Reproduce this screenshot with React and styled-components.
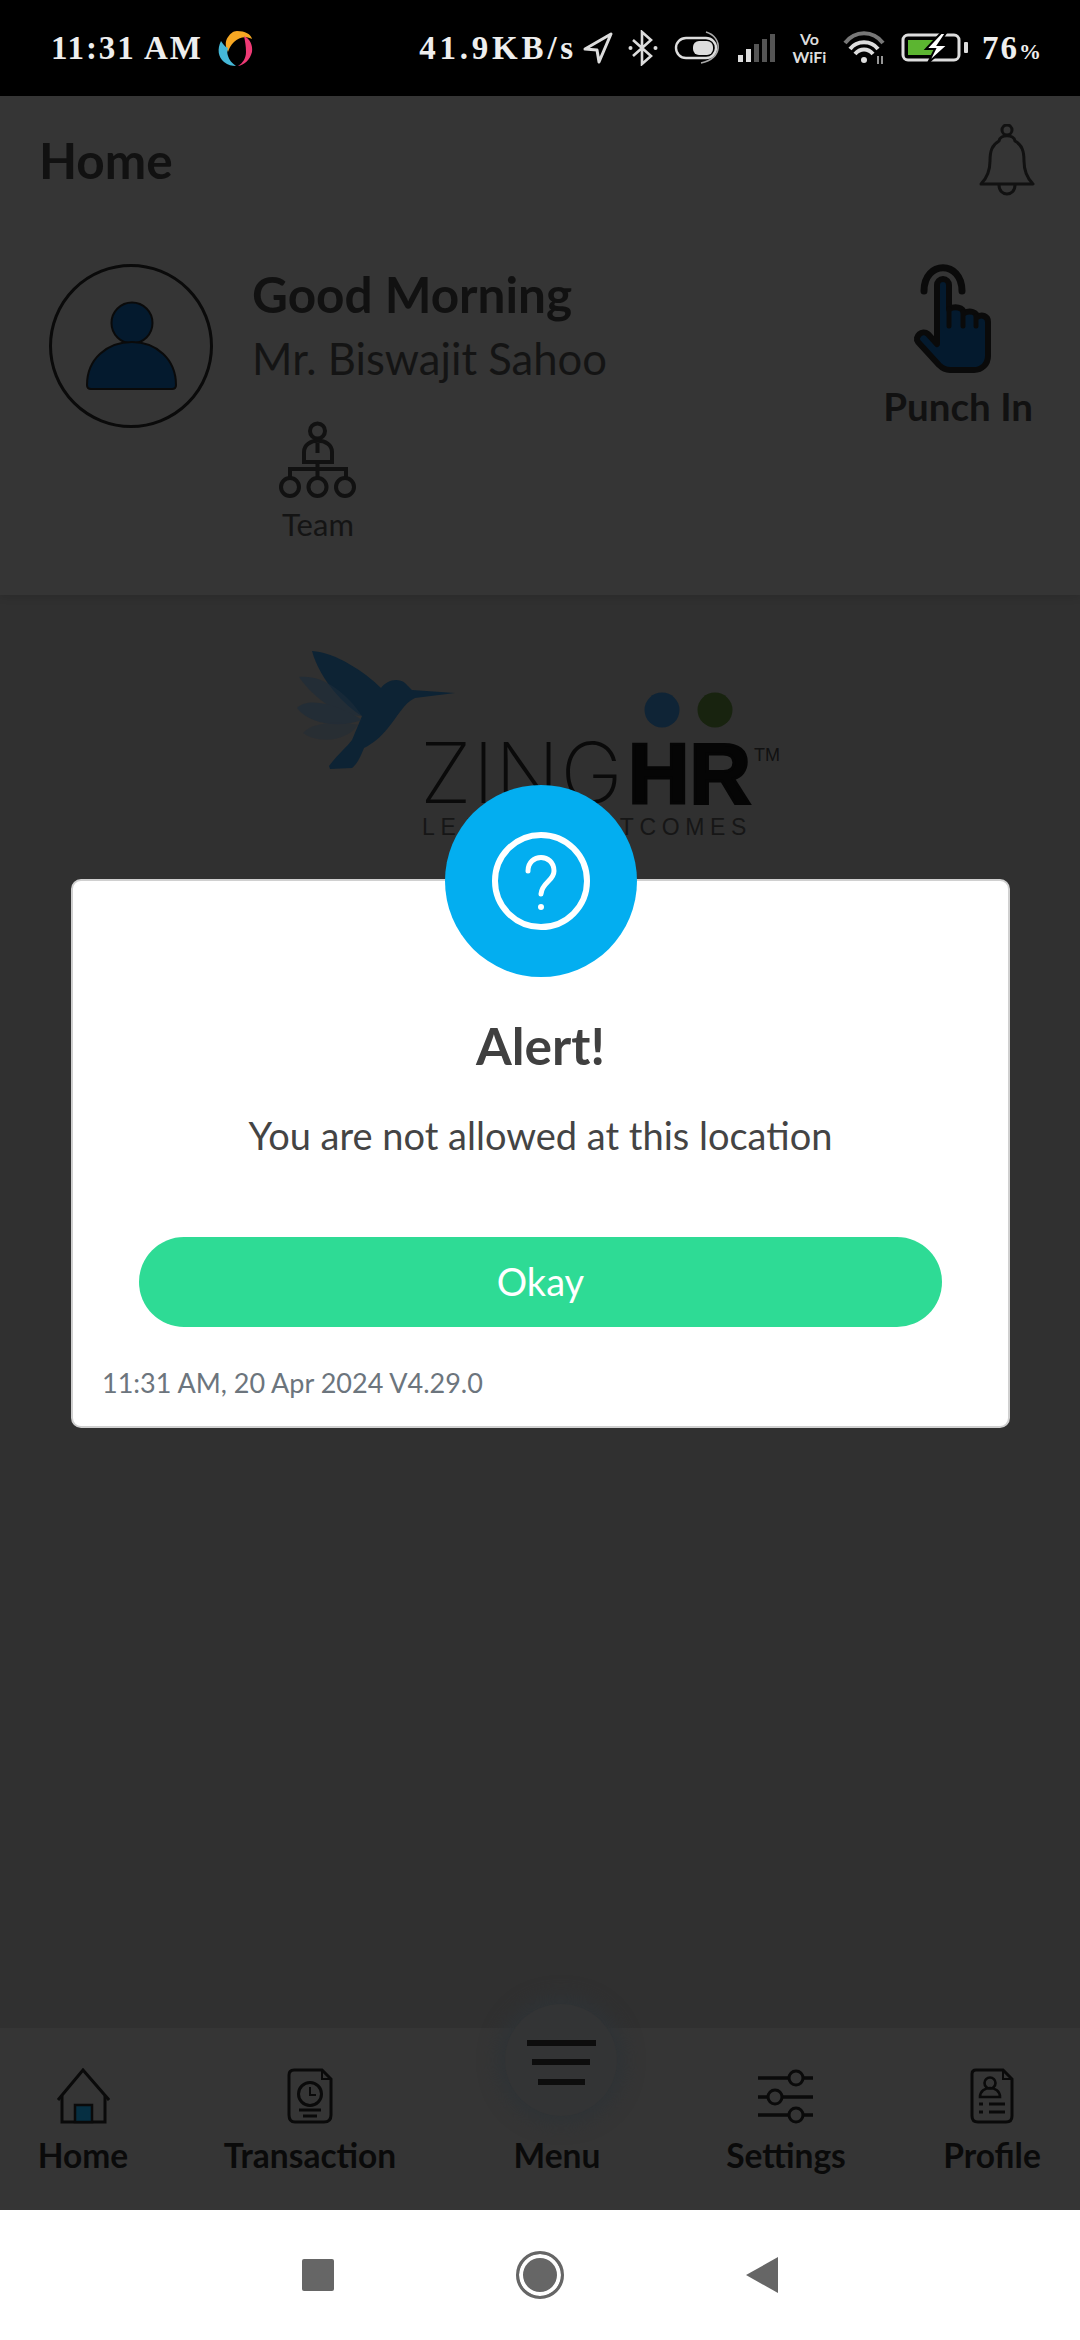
import React from "react";
import styled, { createGlobalStyle } from "styled-components";

const GlobalStyle = createGlobalStyle`
    html, body {
        margin: 0;
        padding: 0;
        background: #303030;
    }
    * {
        box-sizing: border-box;
    }
`;

const App = () => {
    return (
        <Page>
            <GlobalStyle />
            <StatusBar>
                <StatusLeft>
                    <StatusText $spacing={1.9}>11:31 AM</StatusText>
                    <Icon $gap={14} width="36" height="36" viewBox="223 30 36 36">
                        <path d="M243 31c8 0 14 3 15 8-6-3-13-2-18 3-3 3-5 6-6 10-3-6-3-11 0-15 2-3 5-6 9-6z" fill="#f7a823" />
                        <path d="M250 36c6 3 9 9 8 16-2 8-8 13-14 14 5-3 8-8 8-14 0-6-1-11-2-16z" fill="#ee3a75" />
                        <path d="M227 41c-4 8-3 16 3 21 4 3 8 4 12 4-4-3-7-6-8-10-1-3-1-5 0-8-3-1-5-4-7-7z" fill="#45b8d8" />
                    </Icon>
                </StatusLeft>
                <StatusRight>
                    <StatusText $spacing={3.8}>41.9KB/s</StatusText>
                    <Icon $gap={6} width="30" height="34" viewBox="580 32 30 34">
                        <path d="M582 50 L608 35 L596 63 L594 51 Z" fill="none" stroke="#ddd" strokeWidth="3" strokeLinejoin="round" />
                    </Icon>
                    <Icon $gap={15} width="30" height="36" viewBox="625 31 30 36">
                        <path d="M630 41 L648 57 L639 65 V33 L648 41 L630 57" fill="none" stroke="#ddd" strokeWidth="2.6" />
                        <circle cx="627.5" cy="49" r="2" fill="#ddd" />
                        <circle cx="652.5" cy="49" r="2" fill="#ddd" />
                    </Icon>
                    <Icon $gap={16} width="49" height="36" viewBox="671 31 49 36">
                        <rect x="673" y="39" width="40" height="20" rx="10" fill="none" stroke="#ddd" strokeWidth="2.4" />
                        <rect x="690" y="42" width="20" height="14" rx="6" fill="#ddd" />
                        <path d="M703 33 C720 38 720 60 698 64" fill="none" stroke="#aaa" strokeWidth="1.6" />
                    </Icon>
                    <Icon $gap={13} width="42" height="30" viewBox="733 33 42 30">
                        <rect x="735" y="55" width="5" height="7" fill="#ddd" />
                        <rect x="743" y="49" width="5" height="13" fill="#ddd" />
                        <rect x="751" y="44" width="5" height="18" fill="#555" />
                        <rect x="759" y="39" width="5" height="23" fill="#555" />
                        <rect x="767" y="34" width="5" height="28" fill="#555" />
                    </Icon>
                    <VoWifi>
                        <span>Vo</span>
                        <span>WiFi</span>
                    </VoWifi>
                    <Icon $gap={15} width="42" height="34" viewBox="838 32 42 34">
                        <path d="M840 44 C850 31 868 31 878 44" fill="none" stroke="#777" strokeWidth="4" />
                        <path d="M845 50 C852 41 866 41 873 50" fill="none" stroke="#ddd" strokeWidth="4" />
                        <path d="M850 55 C855 49 863 49 868 55" fill="none" stroke="#ddd" strokeWidth="4" />
                        <circle cx="859" cy="61" r="3" fill="#ddd" />
                        <path d="M873 57v8M877 57v8" stroke="#bbb" strokeWidth="1.6" />
                    </Icon>
                    <Icon $gap={16} width="68" height="34" viewBox="896 32 68 34">
                        <rect x="898" y="36" width="56" height="25" rx="5" fill="none" stroke="#ddd" strokeWidth="3" />
                        <rect x="903" y="41" width="30" height="15" fill="#5cb531" />
                        <rect x="959" y="43" width="4" height="11" rx="1" fill="#ddd" />
                        <path d="M936 34 L921 50 H930 L923 64 L943 46 H933 L941 34 Z" fill="#fff" stroke="#000" strokeWidth="2" />
                    </Icon>
                    <Battery>
                        76<small>%</small>
                    </Battery>
                </StatusRight>
            </StatusBar>

            <HomePanel>
                <TitleRow>
                    <Title>Home</Title>
                    <svg width="56" height="72" viewBox="979 125 56 72">
                        <circle cx="1007" cy="131" r="5" fill="none" stroke="#111" strokeWidth="3" />
                        <path d="M999 142 C1000 135 1014 135 1015 142 C1022 146 1024 152 1024 162 C1024 173 1028 180 1033 185 H981 C986 180 990 173 990 162 C990 152 992 146 999 142 Z" fill="none" stroke="#111" strokeWidth="3" strokeLinejoin="round" />
                        <path d="M999 186 C999 198 1015 198 1015 186" fill="none" stroke="#111" strokeWidth="3" />
                    </svg>
                </TitleRow>
                <ProfileRow>
                    <Avatar>
                        <svg width="92" height="90" viewBox="83 297 92 90">
                            <circle cx="130" cy="319" r="20.5" fill="#041a2e" stroke="#0a0a0a" strokeWidth="2" />
                            <path d="M85 381 C85 355 105 338 130 338 C154 338 174 355 174 381 Q174 385 170 385 H89 Q85 385 85 381 Z" fill="#041a2e" stroke="#0a0a0a" strokeWidth="2" />
                        </svg>
                    </Avatar>
                    <Greeting>
                        <Hello>Good Morning</Hello>
                        <Person>Mr. Biswajit Sahoo</Person>
                        <TeamLink>
                            <svg width="78" height="80" viewBox="279 420 78 80" fill="none" stroke="#111" strokeWidth="4">
                                <circle cx="317.5" cy="431" r="7.5" />
                                <path d="M304 462 V452 C304 437 332 437 332 452 V462 Z" />
                                <path d="M317.5 443 V453 M317.5 462 V478 M290 478 V469 H346 V478" />
                                <circle cx="290" cy="487" r="9" />
                                <circle cx="317.5" cy="487" r="9" />
                                <circle cx="345" cy="487" r="9" />
                            </svg>
                            <TeamLabel>Team</TeamLabel>
                        </TeamLink>
                    </Greeting>
                    <Punch>
                        <PunchIcon width="79" height="109" viewBox="0 0 79 109">
                            <path d="M12 27 C12 -4 50 -4 50 27" fill="none" stroke="#0a0a0a" strokeWidth="7" strokeLinecap="round" />
                            <path d="M25 80 V21 a6 6 0 0 1 12 0 V45 c6 -3 14 -2 15 4 c6 -3 13 -1 13 4 c5 -3 11 -1 11 5 V92 c0 8 -6 14 -14 14 H38 c-5 0 -8 -2 -11 -5 L6 78 c-4 -5 4 -13 10 -8 Z" fill="#041a2e" stroke="#0a0a0a" strokeWidth="6" strokeLinejoin="round" />
                            <path d="M37 45 V62 M51 48 V62 M64 52 V62" fill="none" stroke="#0a0a0a" strokeWidth="5" strokeLinecap="round" />
                        </PunchIcon>
                        <PunchLabel>Punch In</PunchLabel>
                    </Punch>
                </ProfileRow>
            </HomePanel>

            <Body>
                <svg width="500" height="205" viewBox="290 640 500 205">
                    <g fill="#0d2334">
                        <path d="M312 651 C335 652 365 672 381 688 C386 681 397 677 405 683 L412 690 L455 693 L415 698 C404 703 398 716 388 728 C380 738 372 744 364 748 C360 758 357 764 352 768 L330 769 L329 766 C338 754 346 748 352 740 L362 716 C345 706 320 680 312 651 Z" />
                    </g>
                    <g fill="#1c2c3a" opacity="0.6">
                        <path d="M299 677 C320 674 345 690 362 716 C340 716 315 700 299 677 Z" />
                        <path d="M297 708 C310 695 345 708 362 720 C340 728 310 725 297 708 Z" />
                        <path d="M303 733 C315 720 345 722 358 725 C348 740 320 745 303 733 Z" opacity="0.6" />
                    </g>
                    <circle cx="662" cy="710" r="17.5" fill="#0f2436" />
                    <circle cx="715" cy="710" r="17.5" fill="#18230f" />
                    <LogoZing x="420" y="803">ZING</LogoZing>
                    <LogoHr x="628" y="803">HR</LogoHr>
                    <LogoTm x="754" y="761">TM</LogoTm>
                    <LogoTag x="422" y="835">LEADING OUTCOMES</LogoTag>
                </svg>
            </Body>

            <BottomNav>
                <NavItem>
                    <NavIcon>
                        <svg width="54" height="56" viewBox="56 2068 54 56">
                            <path d="M58 2100 L83 2070 L109 2100" fill="none" stroke="#0a0a0a" strokeWidth="3" />
                            <path d="M62 2096 V2122 H105 V2096" fill="none" stroke="#0a0a0a" strokeWidth="3" />
                            <rect x="75" y="2105" width="17" height="17" fill="#062f42" stroke="#0a0a0a" strokeWidth="2.5" />
                        </svg>
                    </NavIcon>
                    <NavLabel>Home</NavLabel>
                </NavItem>
                <NavItem>
                    <NavIcon>
                        <svg width="46" height="56" viewBox="288 2068 46 56" fill="none" stroke="#0a0a0a" strokeWidth="3">
                            <path d="M295 2070 H323 L332 2079 V2115 Q332 2122 325 2122 H296 Q290 2122 290 2115 V2075 Q290 2070 295 2070 Z" />
                            <path d="M323 2070 V2079 H332" strokeWidth="2" />
                            <circle cx="311" cy="2094" r="11.5" />
                            <path d="M311 2087 V2095 H317" strokeWidth="2" />
                            <path d="M300 2110 H322 M304 2116 H318" />
                        </svg>
                    </NavIcon>
                    <NavLabel>Transaction</NavLabel>
                </NavItem>
                <MenuItem>
                    <MenuCircle>
                        <MenuBar $w={69} />
                        <MenuBar $w={58} />
                        <MenuBar $w={47} />
                    </MenuCircle>
                    <NavLabel>Menu</NavLabel>
                </MenuItem>
                <NavItem>
                    <NavIcon>
                        <svg width="56" height="56" viewBox="759 2068 56 56" fill="none" stroke="#0a0a0a" strokeWidth="3.4">
                            <path d="M759 2078 H790 M804 2078 H814" />
                            <circle cx="797" cy="2078" r="7" strokeWidth="3" />
                            <path d="M759 2097 H769 M784 2097 H814" />
                            <circle cx="776" cy="2097" r="7" strokeWidth="3" />
                            <path d="M759 2115 H790 M804 2115 H814" />
                            <circle cx="797" cy="2115" r="7" strokeWidth="3" />
                        </svg>
                    </NavIcon>
                    <NavLabel>Settings</NavLabel>
                </NavItem>
                <NavItem>
                    <NavIcon>
                        <svg width="44" height="56" viewBox="970 2068 44 56" fill="none" stroke="#0a0a0a" strokeWidth="3">
                            <path d="M976 2070 H1003 L1012 2079 V2116 Q1012 2122 1006 2122 H978 Q972 2122 972 2116 V2074 Q972 2070 976 2070 Z" />
                            <path d="M1003 2070 V2079 H1012" strokeWidth="2" />
                            <circle cx="990" cy="2083" r="5.5" strokeWidth="2.6" />
                            <path d="M980 2097 C980 2085 1000 2085 1000 2097 Z" strokeWidth="2.6" />
                            <path d="M979 2104 H983 M989 2104 H1005 M979 2112 H983 M989 2112 H1005" />
                        </svg>
                    </NavIcon>
                    <NavLabel>Profile</NavLabel>
                </NavItem>
            </BottomNav>

            <SystemNav>
                <SquareKey />
                <HomeKey />
                <BackKey />
            </SystemNav>

            <AlertCard>
                <AlertBadge>
                    <svg width="98" height="100" viewBox="0 0 98 100" fill="none" stroke="#fff">
                        <circle cx="49" cy="50" r="46" strokeWidth="6" />
                        <path d="M36 40 C36 22 62 22 62 40 C62 50 50 51 49 63" strokeWidth="5" strokeLinecap="round" />
                        <circle cx="49" cy="76" r="3" fill="#fff" strokeWidth="0" />
                    </svg>
                </AlertBadge>
                <AlertTitle>Alert!</AlertTitle>
                <AlertText>You are not allowed at this location</AlertText>
                <OkayButton>Okay</OkayButton>
                <AlertStamp>11:31 AM, 20 Apr 2024 V4.29.0</AlertStamp>
            </AlertCard>
        </Page>
    );
};

export default App;

const Page = styled.div`
    position: relative;
    width: 1080px;
    height: 2340px;
    display: flex;
    flex-direction: column;
    overflow: hidden;
    background: #303030;
    font-family: "Lato", "Noto Sans", sans-serif;
`;

const StatusBar = styled.div`
    height: 96px;
    flex-shrink: 0;
    background: #000;
    display: flex;
    align-items: center;
    justify-content: space-between;
    padding: 0 39px 0 51px;
`;

const StatusLeft = styled.div`
    display: flex;
    align-items: center;
`;

const StatusRight = styled.div`
    display: flex;
    align-items: center;
`;

const StatusText = styled.span`
    font-family: "Liberation Serif", serif;
    font-weight: 700;
    font-size: 33px;
    letter-spacing: ${(props) => props.$spacing}px;
    color: #eee;
`;

const Icon = styled.svg`
    margin-left: ${(props) => props.$gap}px;
    flex-shrink: 0;
`;

const VoWifi = styled.div`
    width: 37px;
    margin-left: 13px;
    display: flex;
    flex-direction: column;
    align-items: center;
    font-size: 16px;
    line-height: 18px;
    font-weight: 700;
    color: #ddd;
`;

const Battery = styled.span`
    margin-left: 13px;
    font-family: "Liberation Serif", serif;
    font-weight: 700;
    font-size: 33px;
    letter-spacing: 2px;
    color: #eee;

    small {
        font-size: 22px;
        letter-spacing: 0;
    }
`;

const HomePanel = styled.div`
    height: 499px;
    flex-shrink: 0;
    background: #353535;
    box-shadow: 0 2px 8px rgba(0, 0, 0, 0.12);
`;

const TitleRow = styled.div`
    height: 128px;
    display: flex;
    align-items: center;
    justify-content: space-between;
    padding: 0 45px 0 39px;
`;

const Title = styled.div`
    font-size: 49.5px;
    font-weight: 700;
    color: #111;
`;

const ProfileRow = styled.div`
    margin-top: 40px;
    display: flex;
    padding: 0 47px 0 49px;
`;

const Avatar = styled.div`
    width: 164px;
    height: 164px;
    flex-shrink: 0;
    border: 3px solid #0a0a0a;
    border-radius: 50%;
    display: flex;
    align-items: center;
    justify-content: center;
`;

const Greeting = styled.div`
    margin-left: 39px;
    flex: 1;
    display: flex;
    flex-direction: column;
    align-items: flex-start;
`;

const Hello = styled.div`
    font-size: 49.5px;
    font-weight: 700;
    line-height: 60px;
    color: #111;
`;

const Person = styled.div`
    margin-top: 6px;
    font-size: 43.6px;
    line-height: 56px;
    color: #141414;
`;

const TeamLink = styled.div`
    margin-top: 34px;
    margin-left: 27px;
    display: flex;
    flex-direction: column;
    align-items: center;
`;

const TeamLabel = styled.div`
    margin-top: 5px;
    font-size: 31px;
    line-height: 38px;
    color: #141414;
`;

const Punch = styled.div`
    display: flex;
    flex-direction: column;
    align-items: center;
`;

const PunchIcon = styled.svg`
    margin-right: 14px;
`;

const PunchLabel = styled.div`
    margin-top: 10px;
    font-size: 38.5px;
    font-weight: 700;
    line-height: 46px;
    color: #111;
`;

const Body = styled.div`
    flex: 1;
    display: flex;
    justify-content: flex-start;
    padding: 45px 0 0 290px;
`;

const LogoZing = styled.text`
    font-family: "Inter", "Liberation Sans", sans-serif;
    font-size: 84px;
    font-weight: 200;
    letter-spacing: 1px;
    fill: #0a0a0a;
`;

const LogoHr = styled.text`
    font-family: "Liberation Sans", sans-serif;
    font-size: 85px;
    font-weight: 700;
    fill: #050505;
    stroke: #050505;
    stroke-width: 3px;
`;

const LogoTm = styled.text`
    font-family: "Liberation Sans", sans-serif;
    font-size: 18px;
    fill: #111;
`;

const LogoTag = styled.text`
    font-family: "Liberation Sans", sans-serif;
    font-size: 23px;
    letter-spacing: 5.6px;
    fill: #161616;
`;

const BottomNav = styled.div`
    position: relative;
    height: 182px;
    flex-shrink: 0;
    background: #353535;
    display: grid;
    grid-template-columns: 166px 288px 206px 252px 160px;
    padding-top: 40px;
`;

const NavItem = styled.div`
    display: flex;
    flex-direction: column;
    align-items: center;
`;

const NavIcon = styled.div`
    height: 56px;
    display: flex;
    align-items: center;
`;

const NavLabel = styled.div`
    margin-top: 11px;
    font-size: 33.5px;
    font-weight: 700;
    line-height: 40px;
    color: #0a0a0a;
`;

const MenuItem = styled(NavItem)`
    justify-content: flex-end;
    height: 107px;
`;

const MenuCircle = styled.div`
    position: absolute;
    top: -24px;
    left: 505px;
    width: 112px;
    height: 112px;
    padding-top: 4px;
    border-radius: 50%;
    background: #333435;
    box-shadow: 0 0 18px 8px #2f3336;
    display: flex;
    flex-direction: column;
    align-items: center;
    justify-content: center;
    gap: 13.5px;
`;

const MenuBar = styled.div`
    width: ${(props) => props.$w}px;
    height: 6px;
    background: #0d0d0d;
`;

const SystemNav = styled.div`
    height: 130px;
    flex-shrink: 0;
    background: #fff;
    display: flex;
    align-items: center;
    justify-content: center;
    gap: 182px;
`;

const SquareKey = styled.div`
    width: 32px;
    height: 32px;
    border-radius: 2px;
    background: #666;
`;

const HomeKey = styled.div`
    width: 48px;
    height: 48px;
    border-radius: 50%;
    background: #666;
    border: 3px solid #666;
    box-shadow: inset 0 0 0 4px #fff;
`;

const BackKey = styled.div`
    width: 32px;
    height: 36px;
    background: #666;
    clip-path: polygon(100% 0, 100% 100%, 0 50%);
`;

const AlertCard = styled.div`
    position: absolute;
    top: 879px;
    left: 71px;
    width: 939px;
    height: 549px;
    background: #fff;
    border: 2px solid #d0d0d0;
    border-radius: 10px;
    display: flex;
    flex-direction: column;
    align-items: center;
`;

const AlertBadge = styled.div`
    position: absolute;
    top: -96px;
    left: 372px;
    width: 192px;
    height: 192px;
    border-radius: 50%;
    background: #03aef0;
    display: flex;
    align-items: center;
    justify-content: center;
`;

const AlertTitle = styled.div`
    margin-top: 134px;
    font-size: 51.5px;
    font-weight: 700;
    line-height: 60px;
    color: #404040;
`;

const AlertText = styled.div`
    margin-top: 35px;
    font-size: 38px;
    line-height: 50px;
    color: #444;
`;

const OkayButton = styled.div`
    margin-top: 77px;
    width: 803px;
    height: 90px;
    flex-shrink: 0;
    border-radius: 45px;
    background: #2edb95;
    color: #fff;
    font-size: 38px;
    padding-bottom: 3px;
    display: flex;
    align-items: center;
    justify-content: center;
`;

const AlertStamp = styled.div`
    align-self: flex-start;
    margin: 38px 0 0 29px;
    font-size: 27px;
    line-height: 36px;
    color: #6c757d;
`;
